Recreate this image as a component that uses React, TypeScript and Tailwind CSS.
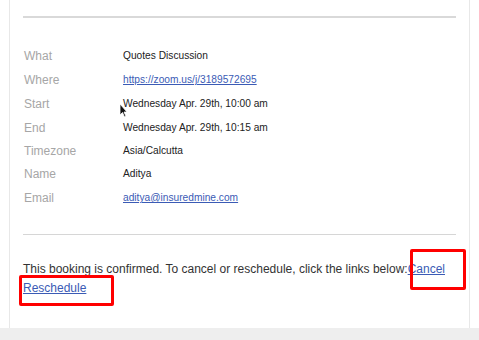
import React from "react";

const rows: { label: string; value: string; link?: boolean; h: number }[] = [
  { label: "What", value: "Quotes Discussion", h: 24 },
  { label: "Where", value: "https://zoom.us/j/3189572695", link: true, h: 24 },
  { label: "Start", value: "Wednesday Apr. 29th, 10:00 am", h: 24 },
  { label: "End", value: "Wednesday Apr. 29th, 10:15 am", h: 24 },
  { label: "Timezone", value: "Asia/Calcutta", h: 22 },
  { label: "Name", value: "Aditya", h: 24 },
  { label: "Email", value: "aditya@insuredmine.com", link: true, h: 24 },
];

export default function App() {
  return (
    <div
      className="relative w-[479px] h-[340px] bg-white overflow-hidden"
      style={{ fontFamily: '"Liberation Sans", Arial, sans-serif' }}
    >
      <div className="ml-[9px] w-[461px] h-[328px] border-x border-[#e8e8e8] px-[13px] pt-[16px]">
        <div className="h-[2px] bg-[#d9d9d9]" />
        <div className="mt-[26px] flex flex-col">
          {rows.map((r) => (
            <div key={r.label} className="flex items-center" style={{ height: r.h }}>
              <div className="w-[100px] pl-[1px] text-[12px] text-[#a6a6a6]">{r.label}</div>
              <div
                className={
                  r.link
                    ? "text-[10.2px] text-[#3b5bb5] underline"
                    : "text-[10.2px] text-[#222222]"
                }
              >
                {r.value}
              </div>
            </div>
          ))}
        </div>
        <div className="mt-[24px] h-[1px] bg-[#d6d6d6]" />
        <div className="mt-[25px] text-[12px] leading-[19px] text-[#333333]">
          This booking is confirmed. To cancel or reschedule, click the links below:
          <span className="text-[#3b5bb5] underline">Cancel</span>
          <br />
          <span className="text-[#3b5bb5] underline">Reschedule</span>
        </div>
      </div>
      <div className="h-[12px] bg-[#eeeeee]" />

      {/* annotation boxes */}
      <div className="absolute left-[410px] top-[249px] w-[56px] h-[41px] border-[3px] border-[#ff0000] rounded-[2px]" />
      <div className="absolute left-[19px] top-[275px] w-[95px] h-[31px] border-[3px] border-[#ff0000] rounded-[2px]" />

      {/* mouse cursor */}
      <svg className="absolute left-[119px] top-[103px]" width="9" height="15" viewBox="0 0 9 15">
        <path d="M1 1 L1 12 L3.5 9.5 L5.5 14 L7 13.3 L5 9 L8 9 Z" fill="#111" stroke="#fff" strokeWidth="0.8" />
      </svg>
    </div>
  );
}
